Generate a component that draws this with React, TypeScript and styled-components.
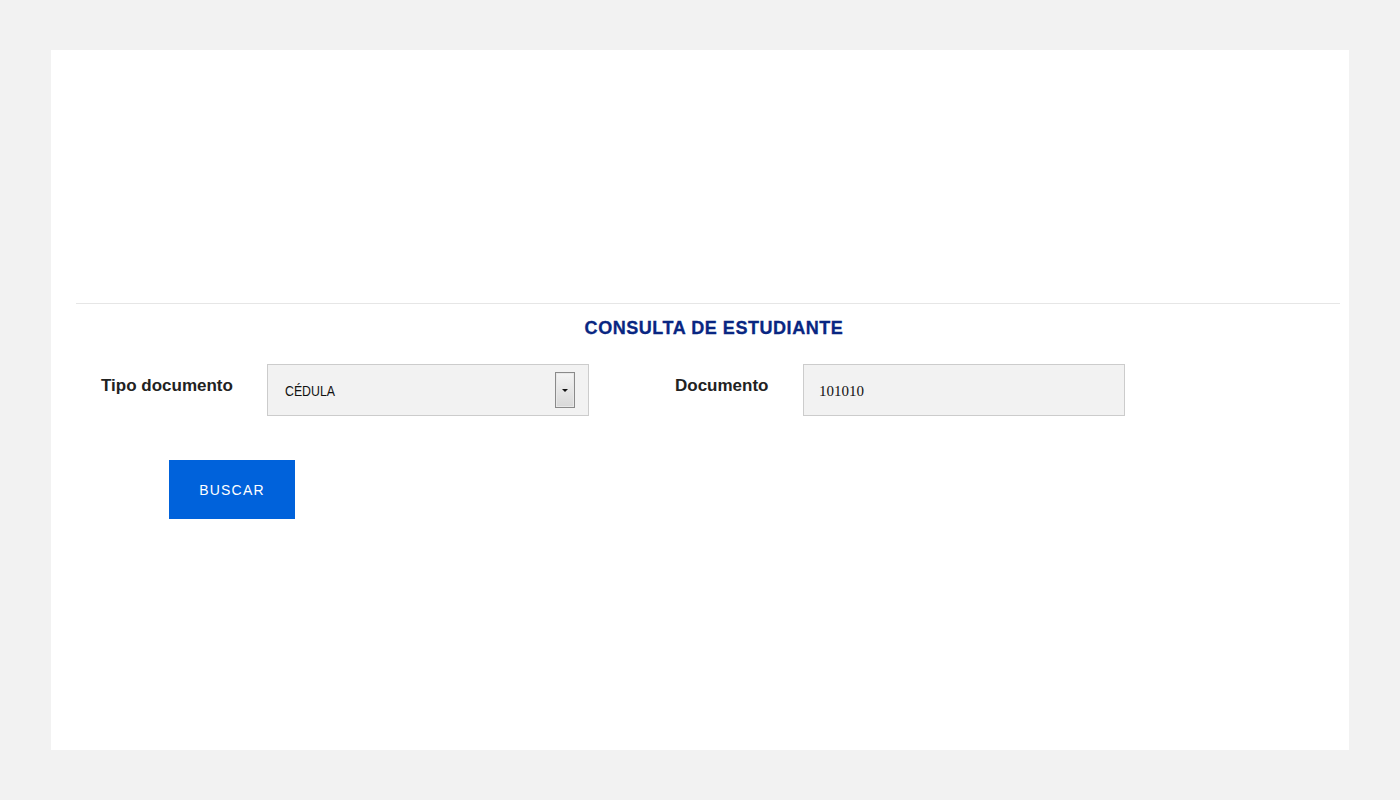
import styled, { createGlobalStyle } from "styled-components";

const GlobalStyle = createGlobalStyle`
  html, body {
    margin: 0;
    padding: 0;
    background: #f2f2f2;
    font-family: "Liberation Sans", Arial, sans-serif;
  }
`;

// Outer grey page with the white sheet in it
const Page = styled.div`
  padding: 50px 51px;
  min-height: 800px;
  box-sizing: border-box;
`;

const Sheet = styled.main`
  background: #ffffff;
  height: 700px;
  padding: 253px 9px 0 25px;
  box-sizing: border-box;
`;

const Divider = styled.hr`
  border: none;
  border-top: 1px solid #e6e6e6;
  margin: 0;
`;

const Title = styled.h2`
  margin: 12px 0 0 12px;
  text-align: center;
  font-size: 18px;
  line-height: 24px;
  font-weight: bold;
  color: #082682;
  letter-spacing: 0.55px;
  -webkit-text-stroke: 0.3px #082682;
`;

const FormRow = styled.div`
  display: flex;
  align-items: flex-start;
  margin-top: 24px;
  padding-left: 25px;
`;

const Field = styled.div<{ $gap?: number }>`
  display: flex;
  align-items: flex-start;
  margin-right: ${(p) => p.$gap ?? 0}px;
`;

const Label = styled.label<{ $width: number }>`
  width: ${(p) => p.$width}px;
  padding-top: 12px;
  font-size: 17px;
  line-height: 20px;
  font-weight: bold;
  color: #222;
`;

const Control = styled.div`
  position: relative;
  width: 322px;
  height: 52px;
  box-sizing: border-box;
  background: #f2f2f2;
  border: 1px solid #cccccc;
  display: flex;
  align-items: center;
  padding-left: 17px;
`;

const SelectText = styled.span`
  font-family: "Liberation Sans Narrow", "Liberation Sans", Arial, sans-serif;
  font-size: 14px;
  color: #111;
  transform: scaleX(0.88);
  transform-origin: left center;
  margin-top: 2px;
`;

const InputText = styled.span`
  font-family: "Liberation Serif", "Times New Roman", serif;
  font-size: 15px;
  color: #111;
  margin-left: -2px;
  margin-top: 2px;
`;

const DropButton = styled.span`
  position: absolute;
  right: 13px;
  top: 7px;
  width: 20px;
  height: 36px;
  box-sizing: border-box;
  border: 1px solid #8a8a8a;
  outline: 1px solid #e8e8e8;
  outline-offset: -2px;
  background: linear-gradient(#f4f4f4, #d8d8d8);
  display: flex;
  align-items: center;
  justify-content: center;
`;

const Arrow = styled.span`
  width: 0;
  height: 0;
  border-left: 3px solid transparent;
  border-right: 3px solid transparent;
  border-top: 3px solid #111;
`;

const ButtonRow = styled.div`
  margin-top: 44px;
  padding-left: 93px;
`;

const SearchButton = styled.button`
  width: 126px;
  height: 59px;
  border: none;
  background: #0062db;
  color: #ffffff;
  font-family: "Liberation Sans", Arial, sans-serif;
  font-size: 14px;
  letter-spacing: 1.2px;
  cursor: pointer;
`;

const App = () => {
  return (
    <>
      <GlobalStyle />
      <Page>
        <Sheet>
          <Divider />
          <Title>CONSULTA DE ESTUDIANTE</Title>

          <FormRow>
            <Field $gap={86}>
              <Label $width={166}>Tipo documento</Label>
              <Control>
                <SelectText>CÉDULA</SelectText>
                <DropButton>
                  <Arrow />
                </DropButton>
              </Control>
            </Field>

            <Field>
              <Label $width={128}>Documento</Label>
              <Control>
                <InputText>101010</InputText>
              </Control>
            </Field>
          </FormRow>

          <ButtonRow>
            <SearchButton>BUSCAR</SearchButton>
          </ButtonRow>
        </Sheet>
      </Page>
    </>
  );
};

export default App;
